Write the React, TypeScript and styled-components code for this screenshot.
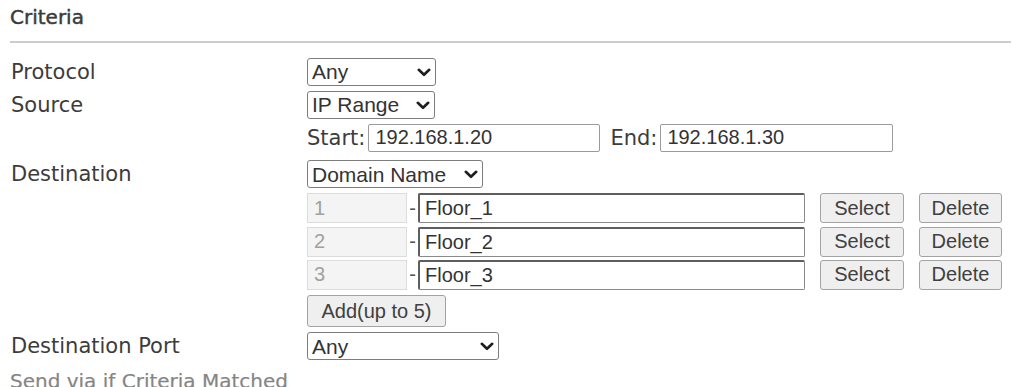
import React from "react";
import styled, { createGlobalStyle } from "styled-components";

const GlobalStyle = createGlobalStyle`
  html, body { margin: 0; padding: 0; background: #fff; }
  body { font-family: "DejaVu Sans", Verdana, sans-serif; color: #3a3a3a; }
  * { box-sizing: border-box; }
`;

const Page = styled.div`
  width: 1012px;
  height: 387px;
  overflow: hidden;
  padding-left: 10px;
`;

const Heading = styled.div<{ $muted?: boolean }>`
  display: flex;
  align-items: center;
  height: 34px;
  margin-top: ${(p) => (p.$muted ? 3 : 0)}px;
  margin-bottom: ${(p) => (p.$muted ? 0 : 7)}px;
  font-size: 20px;
  color: ${(p) => (p.$muted ? "#858585" : "#3b3b3b")};
  -webkit-text-stroke: ${(p) => (p.$muted ? "0.2px" : "0.45px")};
  white-space: nowrap;
`;

const Rule = styled.div`
  height: 2px;
  margin-right: 1px;
  margin-bottom: 12px;
  background: #cdcdcd;
`;

const Row = styled.div<{ $h: number; $pb?: number }>`
  display: grid;
  grid-template-columns: 297px 1fr;
  align-items: center;
  height: ${(p) => p.$h}px;
  padding-bottom: ${(p) => p.$pb ?? 0}px;
`;

const Label = styled.div`
  font-size: 21px;
  color: #3c3c3c;
  white-space: nowrap;
  padding-left: 1px;
`;

const Cell = styled.div`
  display: flex;
  align-items: center;
`;

const SelectWrap = styled.div<{ $w: number }>`
  position: relative;
  width: ${(p) => p.$w}px;
  height: 28px;
`;

const NativeSelect = styled.select`
  appearance: none;
  -webkit-appearance: none;
  width: 100%;
  height: 100%;
  margin: 0;
  padding: 0 0 0 4px;
  border: 1px solid #7d7d7d;
  border-radius: 3px;
  background: #fff;
  font-family: "Liberation Sans", Arial, sans-serif;
  font-size: 21px;
  color: #333;
`;

const Chevron = styled.svg`
  position: absolute;
  right: 5px;
  top: 10px;
  width: 14px;
  height: 9px;
  pointer-events: none;
`;

const FieldLabel = styled.span<{ $ml?: number }>`
  font-size: 21px;
  color: #3c3c3c;
  margin-left: ${(p) => p.$ml ?? 0}px;
  margin-right: 3px;
  white-space: nowrap;
`;

const TextInput = styled.input<{ $w: number }>`
  width: ${(p) => p.$w}px;
  height: 28px;
  margin: 0;
  padding: 0 0 0 6px;
  border: 1px solid #9a9a9a;
  border-radius: 2px;
  background: #fff;
  font-family: "Liberation Sans", Arial, sans-serif;
  font-size: 20px;
  color: #333;
  outline: none;
`;

const NumBox = styled.input`
  width: 100px;
  height: 30px;
  margin: 0;
  padding: 0 0 0 6px;
  border: 1px solid #dcdcdc;
  background: #f4f4f4;
  font-family: "Liberation Sans", Arial, sans-serif;
  font-size: 20px;
  color: #a0a0a0;
  outline: none;
`;

const Dash = styled.span`
  width: 11px;
  text-align: center;
  font-family: "Liberation Sans", Arial, sans-serif;
  font-size: 20px;
  color: #555;
`;

const DomainInput = styled.input`
  width: 387px;
  height: 30px;
  margin: 0;
  padding: 0 0 0 5px;
  border: 1px solid #8a8a8a;
  border-top: 2px solid #5e5e5e;
  border-left: 2px solid #5e5e5e;
  border-radius: 2px;
  background: #fff;
  font-family: "Liberation Sans", Arial, sans-serif;
  font-size: 20px;
  color: #333;
  outline: none;
`;

const Button = styled.button<{ $w: number; $h?: number; $ml?: number }>`
  width: ${(p) => p.$w}px;
  height: ${(p) => p.$h ?? 30}px;
  margin: 0 0 0 ${(p) => p.$ml ?? 0}px;
  padding: 0;
  border: 1px solid #a3a3a3;
  border-radius: 3px;
  background: #efefef;
  font-family: "Liberation Sans", Arial, sans-serif;
  font-size: 20px;
  color: #404040;
`;

const Select: React.FC<{ w: number; value: string }> = ({ w, value }) => (
  <SelectWrap $w={w}>
    <NativeSelect value={value} onChange={() => {}}>
      <option>{value}</option>
    </NativeSelect>
    <Chevron viewBox="0 0 14 9">
      <path d="M1.8 1.8 L7 6.8 L12.2 1.8" fill="none" stroke="#1e1e1e" strokeWidth="2.6" strokeLinecap="round" strokeLinejoin="round" />
    </Chevron>
  </SelectWrap>
);

const domains = ["Floor_1", "Floor_2", "Floor_3"];

export default function App() {
  return (
    <>
      <GlobalStyle />
      <Page>
        <Heading>Criteria</Heading>
        <Rule />
        <Row $h={33}>
          <Label>Protocol</Label>
          <Cell>
            <Select w={129} value="Any" />
          </Cell>
        </Row>
        <Row $h={33}>
          <Label>Source</Label>
          <Cell>
            <Select w={128} value="IP Range" />
          </Cell>
        </Row>
        <Row $h={36} $pb={3}>
          <span />
          <Cell>
            <FieldLabel>Start:</FieldLabel>
            <TextInput $w={232} value="192.168.1.20" readOnly />
            <FieldLabel $ml={10}>End:</FieldLabel>
            <TextInput $w={233} value="192.168.1.30" readOnly />
          </Cell>
        </Row>
        <Row $h={34}>
          <Label>Destination</Label>
          <Cell>
            <Select w={176} value="Domain Name" />
          </Cell>
        </Row>
        {domains.map((d, i) => (
          <Row key={d} $h={i === 0 ? 34 : 33}>
            <span />
            <Cell>
              <NumBox value={String(i + 1)} readOnly />
              <Dash>-</Dash>
              <DomainInput value={d} readOnly />
              <Button $w={84} $ml={15}>Select</Button>
              <Button $w={83} $ml={15}>Delete</Button>
            </Cell>
          </Row>
        ))}
        <Row $h={40}>
          <span />
          <Cell>
            <Button $w={139} $h={32}>Add(up to 5)</Button>
          </Cell>
        </Row>
        <Row $h={30}>
          <Label>Destination Port</Label>
          <Cell>
            <Select w={192} value="Any" />
          </Cell>
        </Row>
        <Heading $muted>Send via if Criteria Matched</Heading>
      </Page>
    </>
  );
}
